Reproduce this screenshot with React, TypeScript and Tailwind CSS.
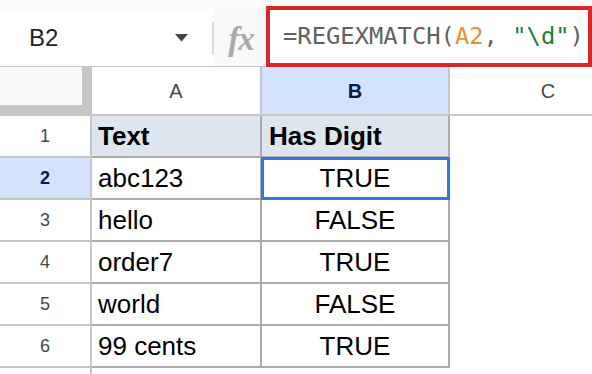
import React from "react";

const rows = [
  { n: 1, a: "Text", b: "Has Digit", head: true },
  { n: 2, a: "abc123", b: "TRUE", sel: true },
  { n: 3, a: "hello", b: "FALSE" },
  { n: 4, a: "order7", b: "TRUE" },
  { n: 5, a: "world", b: "FALSE" },
  { n: 6, a: "99 cents", b: "TRUE" },
];

export default function App() {
  return (
    <div className="w-[592px] h-[374px] overflow-hidden bg-white font-['Liberation_Sans',Arial,sans-serif] text-[#000]">
      {/* formula bar */}
      <div className="flex h-[67px] bg-[#f9fbfd]">
        <div className="flex w-[266px] flex-col">
          <div className="h-[10px]" />
          <div className="flex h-[57px] border-b border-[#c4c7c5]">
            <div className="flex w-[212px] items-center bg-white pl-[29px] pr-[24px]">
              <span className="text-[24px] leading-none text-[#1f1f1f]">B2</span>
              <svg className="ml-auto" width="13" height="8" viewBox="0 0 13 8">
                <path d="M0 0h13L6.5 7.5z" fill="#444746" />
              </svg>
            </div>
            <div className="flex w-[2px] items-center bg-white">
              <div className="h-[33px] w-[2px] bg-[#dadce0]" />
            </div>
            <div className="flex flex-1 items-center justify-center bg-[#f8f9fa] pt-[2px] pl-[2px]">
              <span className="font-['Liberation_Serif',serif] text-[33px] font-bold italic leading-none tracking-[-1px] text-[#a8aaad]">
                fx
              </span>
            </div>
          </div>
        </div>
        <div className="mt-[6px] flex h-[61px] flex-1 items-center border-4 border-[#d9262b] bg-white pl-[13px]">
          <span className="whitespace-pre font-['DejaVu_Sans_Mono',monospace] text-[23.8px] leading-none text-[#616161]">
            =REGEXMATCH(<span className="text-[#e8912d]">A2</span>,{" "}
            <span className="text-[#188038]">"\d"</span>)
          </span>
        </div>
      </div>

      {/* grid */}
      <div className="grid grid-cols-[92px_170px_188px_196px]">
        {/* header row */}
        <div className="h-[49px] border-r-2 border-b-2 border-[#c4c7c5] bg-[#c4c7c5]">
          <div className="h-[38px] w-[82px] bg-[#f8f9fa]" />
        </div>
        <div className="flex h-[49px] items-center justify-center border-r-2 border-b-2 border-[#c4c7c5] bg-white text-[20px] text-[#444746]">
          A
        </div>
        <div className="flex h-[49px] items-center justify-center border-r-2 border-b-2 border-[#c4c7c5] bg-[#d3e3fd] text-[20px] font-bold text-[#041e49]">
          B
        </div>
        <div className="flex h-[49px] items-center justify-center border-b-2 border-[#c4c7c5] bg-white text-[20px] text-[#444746]">
          C
        </div>

        {rows.map((r) => (
          <React.Fragment key={r.n}>
            <div
              className={`flex h-[42px] items-center justify-center border-r-2 border-b-2 border-[#c4c7c5] text-[18px] ${
                r.sel ? "bg-[#d3e3fd] font-bold text-[#041e49]" : "bg-white text-[#444746]"
              }`}
            >
              {r.n}
            </div>
            <div
              className={`flex h-[42px] items-center border-r-2 border-b-2 border-[#ababab] pl-[6px] text-[26px] leading-none ${
                r.head ? "bg-[#dde5ee] font-bold" : "bg-white"
              }`}
            >
              {r.a}
            </div>
            <div
              className={`relative flex h-[42px] items-center border-r-2 border-b-2 border-[#ababab] text-[26px] leading-none ${
                r.head ? "bg-[#dde5ee] pl-[7px] font-bold" : "justify-center bg-white"
              }`}
            >
              {r.b}
              {r.sel && (
                <div className="absolute -left-[1px] -top-[1px] right-[-2px] bottom-[-2px] border-[3px] border-[#3574e3]" />
              )}
            </div>
            <div className="h-[42px] bg-white" />
          </React.Fragment>
        ))}

        {/* row 7 partial */}
        <div className="h-[42px] border-r-2 border-[#c4c7c5] bg-white" />
        <div className="h-[42px] bg-white" />
        <div className="h-[42px] bg-white" />
        <div className="h-[42px] bg-white" />
      </div>
    </div>
  );
}
